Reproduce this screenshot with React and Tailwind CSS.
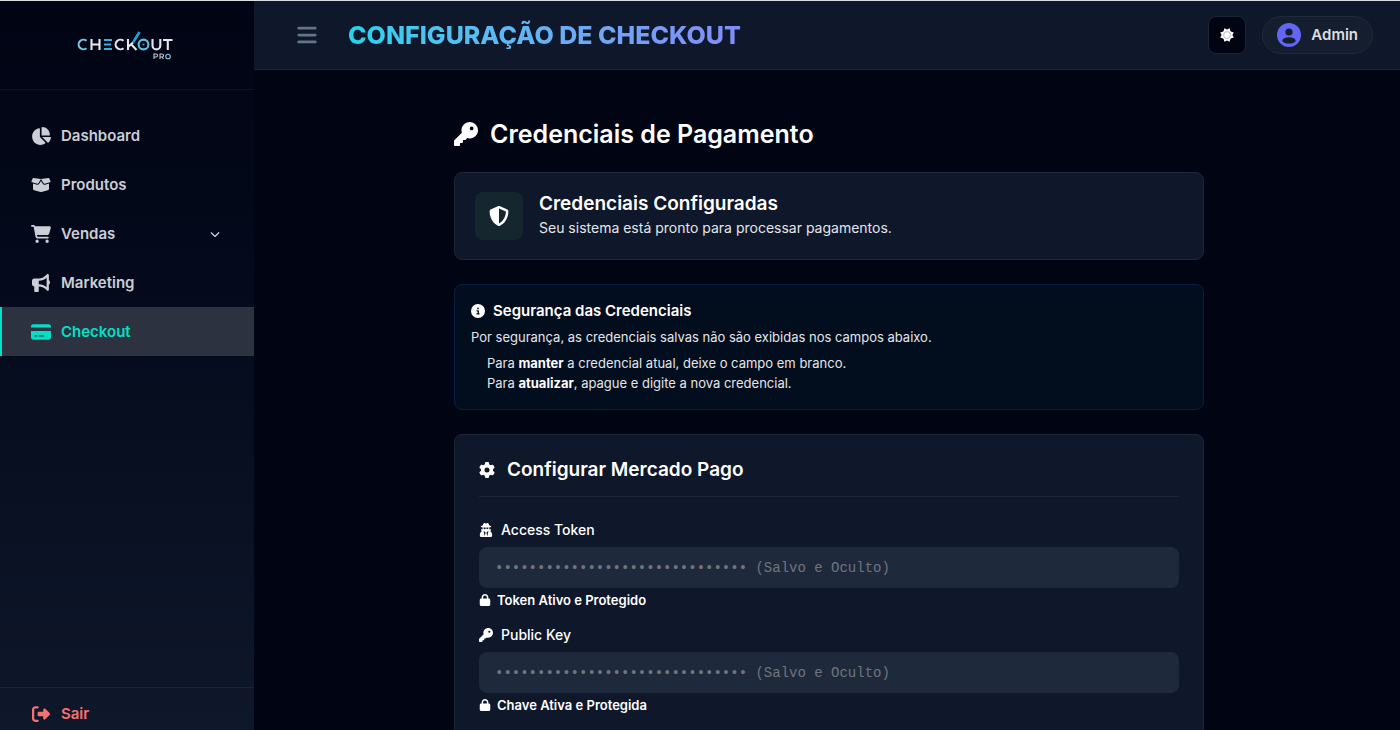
import React, { useState } from 'react';
import { FaUserSecret } from 'react-icons/fa';
import {
    FaBars, FaBoxOpen, FaBullhorn, FaCartShopping, FaChartPie, FaChevronDown, FaCircleInfo,
    FaCreditCard, FaGear, FaKey, FaLock, FaRightFromBracket, FaShieldHalved,
} from 'react-icons/fa6';

const MENU = [
    { label: 'Dashboard', icon: FaChartPie },
    { label: 'Produtos', icon: FaBoxOpen },
    { label: 'Vendas', icon: FaCartShopping, submenu: true },
    { label: 'Marketing', icon: FaBullhorn },
    { label: 'Checkout', icon: FaCreditCard },
];

const CAMPOS = [
    { id: 'access_token', label: 'Access Token', icon: FaUserSecret, status: 'Token Ativo e Protegido' },
    { id: 'public_key', label: 'Public Key', icon: FaKey, status: 'Chave Ativa e Protegida' },
];

const PLACEHOLDER = `${'•'.repeat(30)} (Salvo e Oculto)`;

const Logo = () => (
    <svg viewBox="0 0 96 30" className="mr-1 w-24" fill="none" strokeWidth="2.1" role="img" aria-label="Checkout Pro">
        <g stroke="#e5e9ee">
            <path d="M14.5 9v11M22.5 9v11M14.5 14.5h8" />
            <path d="M46.5 10.8a4.8 4.8 0 1 0 0 7.4" />
            <path d="M51 9v11M51 17l5-4.5M54 14l5.5 6" />
            <path d="M75.5 9v6.5a3.9 3.9 0 0 0 7.8 0V9" />
            <path d="M86 10h9.5M90.8 10v10" />
        </g>
        <path d="M9.5 10.8a4.8 4.8 0 1 0 0 7.4" stroke="#7cc5dc" />
        <path d="M27 10h8M27 14.5h7M27 19h8" stroke="#35b3dc" />
        <path d="M56 12.5L62.5 2" stroke="#16a5dc" strokeWidth="2.6" />
        <circle cx="66.5" cy="14.5" r="4.9" stroke="#62bedb" />
        <circle cx="66.5" cy="14.5" r="1.1" fill="#22a7d8" stroke="none" />
        <g strokeWidth="1.1">
            <path d="M77 29v-5h2a1.5 1.5 0 0 1 0 3h-2M83 29v-5h2a1.5 1.5 0 0 1 0 3h-2M85 27l1.5 2" stroke="#c5ccd5" />
            <circle cx="91" cy="26.5" r="2.3" stroke="#7cc5dc" />
        </g>
    </svg>
);

const SunIcon = () => (
    <svg viewBox="0 0 16 16" className="size-4" aria-hidden="true">
        <path d="M8 3v10M3 8h10M4.5 4.5l7 7M11.5 4.5l-7 7" stroke="#ffffff" strokeWidth="3" />
        <path d="M5.4 1.2L8 2.6l2.6-1.4.9 3.3 3.3.9L13.4 8l1.4 2.6-3.3.9-.9 3.3L8 13.4l-2.6 1.4-.9-3.3-3.3-.9L2.6 8 1.2 5.4l3.3-.9z" fill="#ffffff" />
        <circle cx="8" cy="8" r="3.4" fill="none" stroke="#b9bdc4" strokeWidth="1" />
    </svg>
);

const Sidebar = ({ ativo, onSelect }) => (
    <aside className="flex w-[254px] shrink-0 flex-col bg-linear-to-b from-[#010413] to-[#0f172a]">
        <div className="flex h-[89px] items-center justify-center border-b border-white/5">
            <Logo />
        </div>
        <nav className="flex flex-1 flex-col pt-[21px]">
            {MENU.map(({ label, icon: Icon, submenu }) => (
                <a
                    key={label}
                    href="#"
                    onClick={() => onSelect(label)}
                    className={`flex items-center gap-2.5 border-l-2 py-3.5 pr-8 pl-[29px] text-[15px]/[21px] font-semibold ${
                        ativo === label ? 'border-[#00e0c6] bg-[#2d3240] text-[#00e0c6]' : 'border-transparent text-[#cbced6]'
                    }`}
                >
                    <Icon className="w-5 text-[18px]" />
                    <span className="flex-1">{label}</span>
                    {submenu && <FaChevronDown className="mr-0.5 text-[10px]" />}
                </a>
            ))}
        </nav>
        <div className="border-t border-white/5 pt-[15px] pb-1.5">
            <a href="#" className="flex items-center gap-2.5 pl-[31px] text-[15px]/[21px] font-semibold text-[#f87171]">
                <FaRightFromBracket className="w-5 text-[18px]" />
                Sair
            </a>
        </div>
    </aside>
);

const Header = () => (
    <header className="flex h-[69px] shrink-0 items-center border-b border-[#1e2737] bg-[#0f172a] pr-[27px] pl-[42px]">
        <button aria-label="Abrir menu" className="text-[#64748b]">
            <FaBars className="text-[22px]" />
        </button>
        <h1 className="ml-[30px] bg-linear-to-r from-[#22d3ee] to-[#818cf8] bg-clip-text text-[25px]/8 font-extrabold text-transparent">
            CONFIGURAÇÃO DE CHECKOUT
        </h1>
        <div className="ml-auto flex items-center gap-4">
            <button aria-label="Alternar tema" className="flex size-[38px] items-center justify-center rounded-lg border border-[#1a2536] bg-[#010413]">
                <SunIcon />
            </button>
            <button className="flex h-[38px] items-center gap-2.5 rounded-full border border-[#1e2a3b] bg-[#141e2e] pr-3.5 pl-3.5 text-[15px] font-semibold text-[#dcdfe5]">
                <svg viewBox="0 0 24 24" className="size-6">
                    <circle cx="12" cy="12" r="12" fill="#6366f1" />
                    <circle cx="12" cy="9" r="3.6" fill="#141e2e" />
                    <ellipse cx="12" cy="17.4" rx="6.6" ry="3.2" fill="#141e2e" />
                </svg>
                Admin
            </button>
        </div>
    </header>
);

const Campo = ({ id, label, icon: Icon, status }) => (
    <div className="mb-4">
        <label htmlFor={id} className="mb-1.5 flex items-center gap-2 text-[14px]/[22px] font-medium">
            <Icon className="text-[14px]" />
            {label}
        </label>
        <input
            id={id}
            type="text"
            placeholder={PLACEHOLDER}
            className="block h-[41px] w-full rounded-lg bg-[#1e293b] px-4 font-['Liberation_Mono',monospace] text-sm text-white outline-none placeholder:text-[#70757b]"
        />
        <p className="mt-1 flex items-center gap-1.5 text-[13px]/4 font-semibold">
            <FaLock className="text-[12px]" />
            {status}
        </p>
    </div>
);

export default function App() {
    const [ativo, setAtivo] = useState('Checkout');

    return (
        <div className="flex h-screen overflow-hidden border-t border-[#dcdfe2] bg-[#010413] font-['Inter',sans-serif] text-white">
            <Sidebar ativo={ativo} onSelect={setAtivo} />
            <div className="flex min-w-0 flex-1 flex-col">
                <Header />
                <main className="flex-1 overflow-hidden pt-[46px] pr-8 pl-9">
                    <div className="mx-auto max-w-[750px]">
                        <h2 className="mb-5 flex items-center gap-3 text-[25px]/9 font-semibold">
                            <FaKey className="text-[24px]" />
                            Credenciais de Pagamento
                        </h2>

                        <section className="mb-6 flex items-center gap-4 rounded-lg border border-[#1b2636] bg-[#0f172a] px-5 py-[19px]">
                            <div className="flex size-12 items-center justify-center rounded-lg bg-[#16262e]">
                                <FaShieldHalved className="text-[20px]" />
                            </div>
                            <div>
                                <h3 className="text-[19px]/6 font-semibold">Credenciais Configuradas</h3>
                                <p className="text-[14px]/6 text-[#e4e6ea]">Seu sistema está pronto para processar pagamentos.</p>
                            </div>
                        </section>

                        <section className="mb-6 rounded-lg border border-[#07203f] bg-[#020d1e] p-4 text-[13px]/5 text-[#e4e6ea]">
                            <h3 className="mb-1.5 flex items-center gap-2 text-[15px]/5 font-semibold text-white">
                                <FaCircleInfo className="text-[14px]" />
                                Segurança das Credenciais
                            </h3>
                            <p className="mb-1.5">Por segurança, as credenciais salvas não são exibidas nos campos abaixo.</p>
                            <ul className="pl-4">
                                <li>Para <strong className="text-white">manter</strong> a credencial atual, deixe o campo em branco.</li>
                                <li>Para <strong className="text-white">atualizar</strong>, apague e digite a nova credencial.</li>
                            </ul>
                        </section>

                        <section className="rounded-lg border border-[#1b2636] bg-[#0f172a] px-6 pt-[23px] pb-6">
                            <h3 className="mb-[22px] flex items-center gap-3 border-b border-[#1e2737] pb-3.5 text-[19px]/6 font-semibold">
                                <FaGear className="text-[16px]" />
                                Configurar Mercado Pago
                            </h3>
                            {CAMPOS.map(campo => <Campo key={campo.id} {...campo} />)}
                        </section>
                    </div>
                </main>
            </div>
        </div>
    );
}
